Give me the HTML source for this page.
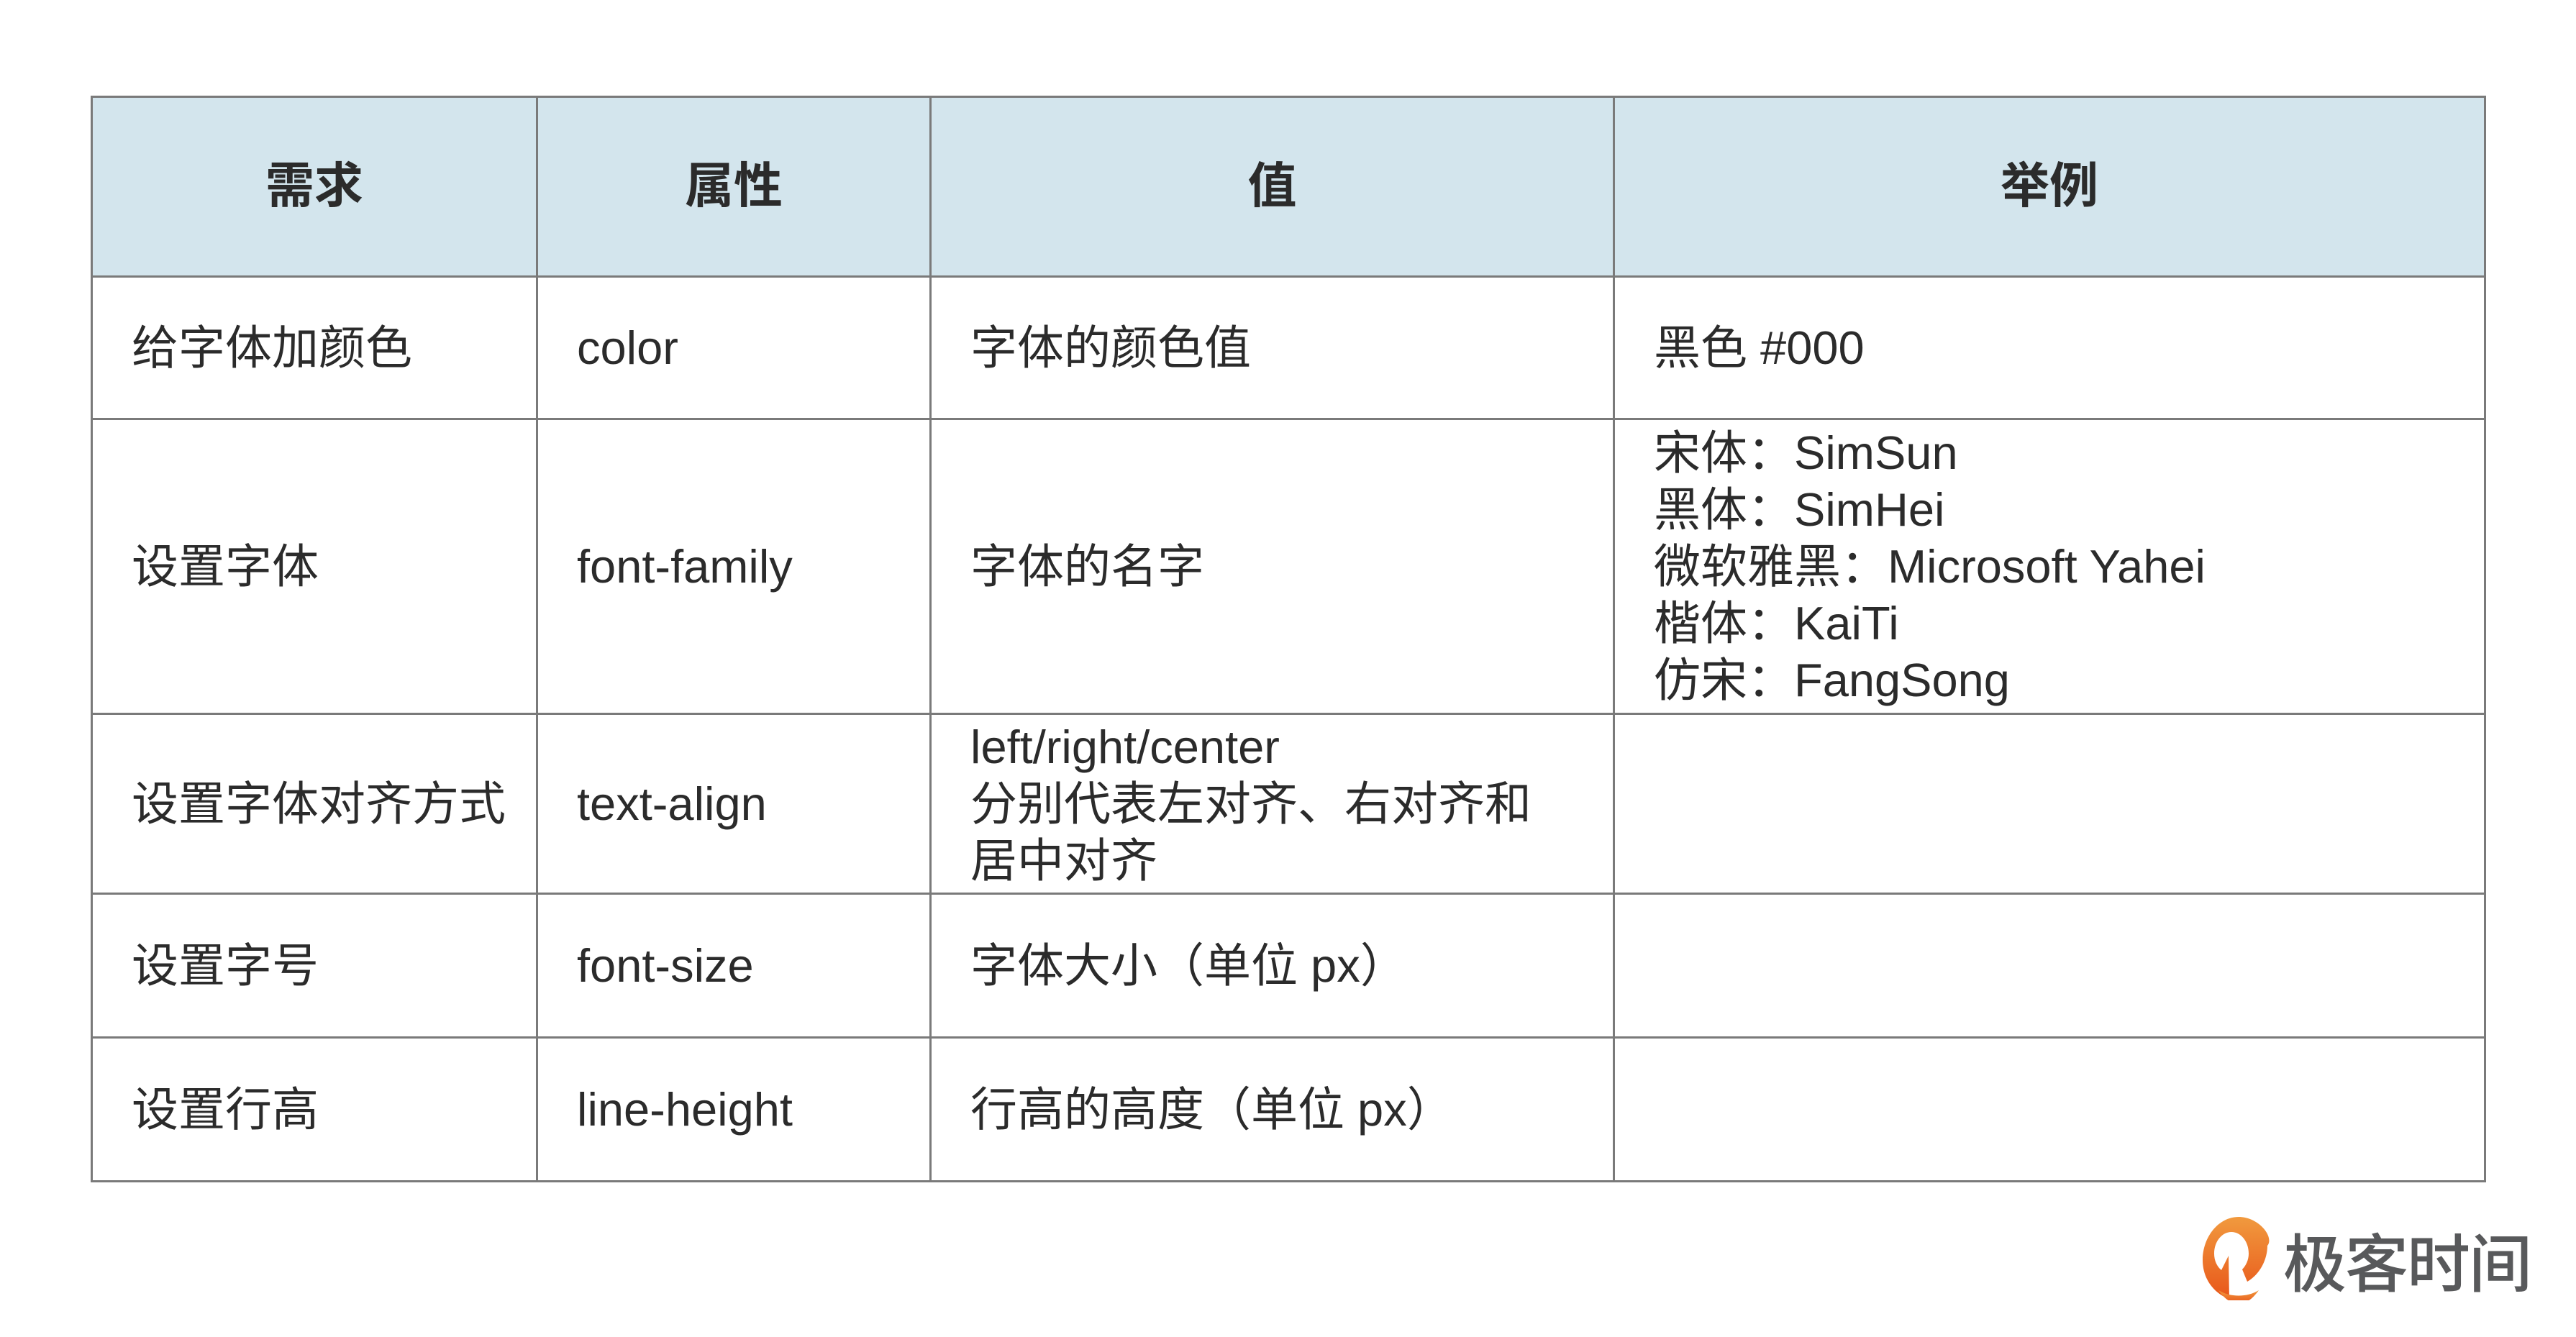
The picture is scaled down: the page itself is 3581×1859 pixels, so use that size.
<!DOCTYPE html>
<html><head><meta charset="utf-8">
<style>
html,body{margin:0;padding:0;background:#fff;width:3581px;height:1859px;overflow:hidden;}
body{font-family:"Liberation Sans","Noto Sans CJK SC",sans-serif;color:#2b2b2b;}
table{position:absolute;left:126px;top:133px;border-collapse:collapse;table-layout:fixed;width:3327px;}
td,th{border:3px solid #7a7a7a;padding:0 0 0 54px;font-size:65px;line-height:79px;text-align:left;vertical-align:middle;font-weight:normal;}
th{background:#d3e5ed;font-weight:bold;text-align:center;padding:0;font-size:68px;height:247px;}
.logo{position:absolute;left:3062px;top:1692px;}
.lt{position:absolute;left:3174px;top:1702px;font-size:88px;line-height:100px;color:#58595b;font-family:"Noto Sans CJK SC",sans-serif;font-weight:500;letter-spacing:-2px;}
</style></head><body>
<table>
<colgroup><col style="width:619px"><col style="width:547px"><col style="width:950px"><col style="width:1211px"></colgroup>
<tr><th>需求</th><th>属性</th><th>值</th><th>举例</th></tr>
<tr style="height:198px"><td>给字体加颜色</td><td>color</td><td>字体的颜色值</td><td>黑色 #000</td></tr>
<tr style="height:410px"><td>设置字体</td><td>font-family</td><td>字体的名字</td><td>宋体：SimSun<br>黑体：SimHei<br>微软雅黑：Microsoft Yahei<br>楷体：KaiTi<br>仿宋：FangSong</td></tr>
<tr style="height:250px"><td>设置字体对齐方式</td><td>text-align</td><td>left/right/center<br>分别代表左对齐、右对齐和<br>居中对齐</td><td></td></tr>
<tr style="height:200px"><td>设置字号</td><td>font-size</td><td>字体大小（单位 px）</td><td></td></tr>
<tr style="height:200px"><td>设置行高</td><td>line-height</td><td>行高的高度（单位 px）</td><td></td></tr>
</table>
<svg class="logo" width="100" height="116" viewBox="0 0 100 116">
<defs><linearGradient id="g" x1="0" y1="0" x2="0" y2="1"><stop offset="0" stop-color="#f19a3e"/><stop offset="1" stop-color="#e8561a"/></linearGradient></defs>
<path fill="url(#g)" d="M50 0C22 0 0 28 0 60c0 22 11 40 28 50l9 4-1-60-10 20c-6-5-10-13-10-23 0-17 11-30 24-30s24 13 24 30c0 9-4 17-9 22l7 17c16-9 28-29 28-50C100 28 78 0 50 0z"/>
<path fill="url(#g)" d="M22 102c16 10 40 10 56 0-10 14-18 18-28 18s-18-4-28-18z"/>
</svg>
<div class="lt">极客时间</div>
</body></html>
